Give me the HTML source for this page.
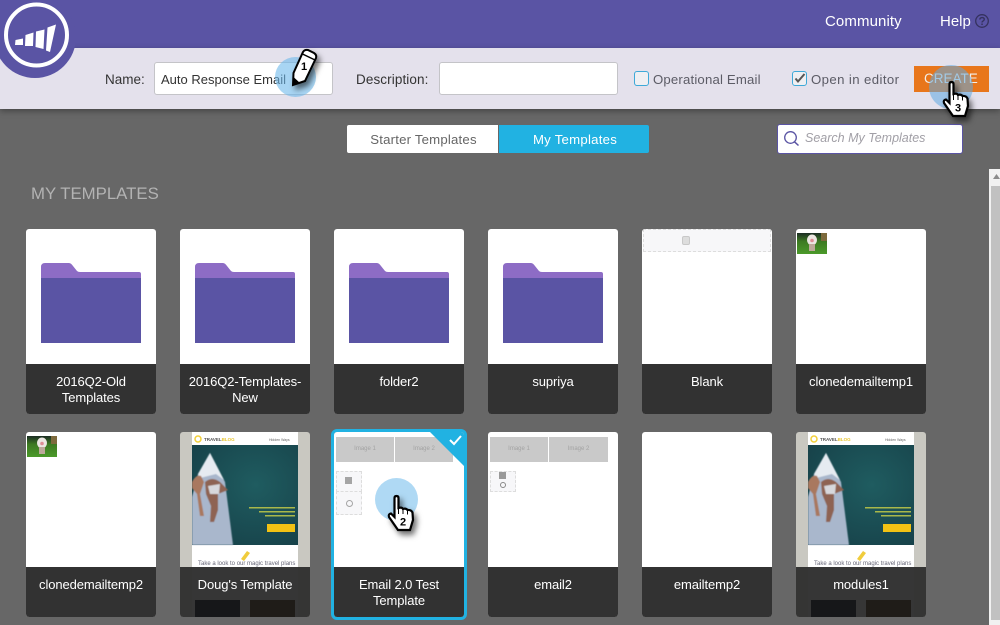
<!DOCTYPE html>
<html><head><meta charset="utf-8">
<style>
html,body{margin:0;padding:0;width:1000px;height:625px;overflow:hidden;background:#676767;font-family:"Liberation Sans","DejaVu Sans",sans-serif}
.a{position:absolute}
#root{position:relative;width:1000px;height:625px;overflow:hidden;background:#676767}
.card{position:absolute;width:130px;height:185px;background:#fff;border-radius:3px;overflow:hidden}
.lbl{position:absolute;left:0;right:0;top:135px;height:50px;background:#323232;color:#fff;font-size:13px;line-height:16px;text-align:center;padding-top:10px;box-sizing:border-box;letter-spacing:-.1px}
.t{position:absolute;white-space:nowrap}
.ph{position:absolute;background:#c9c9c9;color:#a3a3a3;font-size:6px;text-align:center;line-height:25px;height:25px}
.dash{position:absolute;border:1px dashed #ddd;background:#f7f7f9;box-sizing:border-box}
.sh{filter:drop-shadow(3px 4px 3px rgba(0,0,0,.55))}
</style></head><body>
<div id="root">
<div class="a" style="left:0;top:0;width:1000px;height:48px;background:#5a54a4"></div>
<div class="a" style="left:0;top:48px;width:1000px;height:61px;background:#e4e1ec;box-shadow:0 2px 6px rgba(0,0,0,.35)"></div>
<svg class="a" style="left:0;top:0" width="80" height="80" viewBox="0 0 80 80">
<circle cx="35" cy="37" r="41" fill="#5a54a4"/>
<circle cx="36.500" cy="35" r="30.500" fill="#5a54a4" stroke="#fff" stroke-width="4"/>
<path d="M15.500 40L23 38.500V45H15Z M25.500 35L33.500 32.500 33 46H25Z M36 31.500L44.500 29.500 43.500 49 35.500 47Z M47.500 27.500L56 24.500 50 52 46 50.500Z" fill="#fff"/>
</svg>
<div class="t" style="left:825px;top:13px;font-size:15px;color:#fff;letter-spacing:.1px">Community</div>
<div class="t" style="left:940px;top:13px;font-size:15px;color:#fff">Help</div>
<svg class="a" style="left:975px;top:14px" width="15" height="15" viewBox="0 0 15 15"><circle cx="7" cy="7" r="6.300" fill="none" stroke="#35325f" stroke-width="1.300"/><path d="M4.800 5.600C5 3 9.300 3 9.300 5.300C9.300 6.900 7 6.900 7 8.500" fill="none" stroke="#35325f" stroke-width="1.400"/><rect x="6.300" y="9.500" width="1.500" height="1.500" fill="#35325f"/></svg>

<div class="t" style="left:105px;top:72px;font-size:13.500px;color:#333">Name:</div>
<div class="a" style="left:154px;top:62px;width:179px;height:33px;background:#fff;border:1px solid #c4c4c8;border-radius:3px;box-sizing:border-box"></div>
<div class="t" style="left:161px;top:72px;font-size:13px;color:#333">Auto Response Email</div>
<div class="t" style="left:356px;top:72px;font-size:13.500px;color:#333;letter-spacing:.1px">Description:</div>
<div class="a" style="left:439px;top:62px;width:179px;height:33px;background:#fff;border:1px solid #c4c4c8;border-radius:3px;box-sizing:border-box"></div>
<div class="a" style="left:634px;top:71px;width:15px;height:15px;background:#efeff2;border:1.500px solid #3ea9d8;border-radius:3px;box-sizing:border-box"></div>
<div class="t" style="left:653px;top:72px;font-size:13.200px;color:#5c5c66;letter-spacing:.17px">Operational Email</div>
<div class="a" style="left:792px;top:71px;width:15px;height:15px;background:#efeff2;border:1.500px solid #3ea9d8;border-radius:3px;box-sizing:border-box"></div>
<svg class="a" style="left:792px;top:71px" width="15" height="15" viewBox="0 0 15 15"><path d="M3.500 7.500L6 10.500 12.500 3" fill="none" stroke="#555" stroke-width="2"/></svg>
<div class="t" style="left:811px;top:72px;font-size:13.200px;color:#5c5c66;letter-spacing:.4px">Open in editor</div>
<div class="a" style="left:914px;top:66px;width:75px;height:26px;background:#e8761b"></div>
<div class="t" style="left:924px;top:71px;font-size:13.500px;color:#f3efe9">CREATE</div>

<div class="a" style="left:347px;top:125px;width:151px;height:28px;background:#fff;border-radius:2px 0 0 2px"></div>
<div class="t" style="left:348px;top:132px;width:151px;text-align:center;font-size:13.200px;color:#666;letter-spacing:.2px">Starter Templates</div>
<div class="a" style="left:499px;top:125px;width:150px;height:28px;background:#21b2e2;border-radius:0 2px 2px 0"></div>
<div class="t" style="left:500px;top:132px;width:150px;text-align:center;font-size:13.200px;color:#fff;letter-spacing:.25px">My Templates</div>
<div class="a" style="left:777px;top:124px;width:186px;height:30px;background:#fff;border:1px solid #5a54a4;border-radius:3px;box-sizing:border-box"></div>
<svg class="a" style="left:783px;top:130px" width="18" height="18" viewBox="0 0 18 18"><circle cx="7.500" cy="7.500" r="5.800" fill="none" stroke="#5a54a4" stroke-width="1.300"/><path d="M11.500 11.800L15.500 15.500" stroke="#5a54a4" stroke-width="1.500"/></svg>
<div class="t" style="left:805px;top:131px;font-size:12.500px;font-style:italic;color:#a19fa6">Search My Templates</div>

<div class="t" style="left:31px;top:184px;font-size:16.800px;color:#b3b3b3">MY TEMPLATES</div>

<div class="a" style="left:989px;top:169px;width:11px;height:456px;background:#f1f1f1"></div>
<div class="a" style="left:991px;top:186px;width:9px;height:434px;background:#c1c1c1"></div>
<svg class="a" style="left:993px;top:174px" width="7" height="5"><path d="M0 5L3.500 0 7 5Z" fill="#8b8b8b"/></svg>

<!-- Row 1 -->
<div class="card" style="left:26px;top:229px"><svg class="a" style="left:15px;top:34px" width="100" height="80"><path d="M0 4Q0 0 4 0H28Q30 0 32 3L36 8Q37 9 39 9H98Q100 9 100 11V16H0Z" fill="#8d6cc5"/><rect y="15" width="100" height="65" fill="#5a54a4"/></svg><div class="lbl">2016Q2-Old<br>Templates</div></div>
<div class="card" style="left:180px;top:229px"><svg class="a" style="left:15px;top:34px" width="100" height="80"><path d="M0 4Q0 0 4 0H28Q30 0 32 3L36 8Q37 9 39 9H98Q100 9 100 11V16H0Z" fill="#8d6cc5"/><rect y="15" width="100" height="65" fill="#5a54a4"/></svg><div class="lbl">2016Q2-Templates-<br>New</div></div>
<div class="card" style="left:334px;top:229px"><svg class="a" style="left:15px;top:34px" width="100" height="80"><path d="M0 4Q0 0 4 0H28Q30 0 32 3L36 8Q37 9 39 9H98Q100 9 100 11V16H0Z" fill="#8d6cc5"/><rect y="15" width="100" height="65" fill="#5a54a4"/></svg><div class="lbl">folder2</div></div>
<div class="card" style="left:488px;top:229px"><svg class="a" style="left:15px;top:34px" width="100" height="80"><path d="M0 4Q0 0 4 0H28Q30 0 32 3L36 8Q37 9 39 9H98Q100 9 100 11V16H0Z" fill="#8d6cc5"/><rect y="15" width="100" height="65" fill="#5a54a4"/></svg><div class="lbl">supriya</div></div>
<div class="card" style="left:642px;top:229px"><div class="dash" style="left:1px;top:0;width:128px;height:23px"></div><div class="a" style="left:40px;top:7px;width:8px;height:9px;background:#ddd;border:1px solid #c8c8c8;border-radius:2px;box-sizing:border-box"></div><div class="lbl">Blank</div></div>
<div class="card" style="left:796px;top:229px"><svg class="a" style="left:1px;top:4px" width="30" height="21"><defs><linearGradient id="g" x1="0" y1="0" x2="0" y2="1"><stop offset="0" stop-color="#1c2c24"/><stop offset=".4" stop-color="#3d7a22"/><stop offset="1" stop-color="#4b9a2a"/></linearGradient></defs><rect width="30" height="21" fill="url(#g)"/><rect x="24" width="6" height="8" fill="#7d6a3d"/><ellipse cx="15" cy="7" rx="5" ry="5.500" fill="#ece6e2"/><circle cx="15" cy="7.500" r="1.800" fill="#dd8d95"/><rect x="12" y="11" width="6" height="7" fill="#bda99a"/></svg><div class="lbl">clonedemailtemp1</div></div>

<!-- Row 2 -->
<div class="card" style="left:26px;top:432px"><svg class="a" style="left:1px;top:4px" width="30" height="21"><rect width="30" height="21" fill="url(#g)"/><rect x="24" width="6" height="8" fill="#7d6a3d"/><ellipse cx="15" cy="7" rx="5" ry="5.500" fill="#ece6e2"/><circle cx="15" cy="7.500" r="1.800" fill="#dd8d95"/><rect x="12" y="11" width="6" height="7" fill="#bda99a"/></svg><div class="lbl">clonedemailtemp2</div></div>

<div class="card" style="left:180px;top:432px;background:#c9c8c1">
 <div class="a" style="left:12px;top:0;width:106px;height:185px;background:#fff"></div>
 <svg class="a" style="left:12px;top:0" width="106" height="135">
  <defs><filter id="b" x="-10%" y="-10%" width="120%" height="120%"><feGaussianBlur stdDeviation=".6"/></filter><radialGradient id="w" cx=".6" cy=".4" r=".8"><stop offset="0" stop-color="#1f5c60"/><stop offset="1" stop-color="#163f47"/></radialGradient></defs>
  <circle cx="6" cy="7" r="3" fill="none" stroke="#f2cf3a" stroke-width="1.500"/>
  <text x="12" y="9" font-size="4.500" font-weight="bold" fill="#555" font-family="Liberation Sans">TRAVEL<tspan fill="#e8c52e">BLOG</tspan></text>
  <text x="77" y="9" font-size="3.500" fill="#666" font-family="Liberation Sans">Hidden Ways</text>
  <rect y="13" width="106" height="100" fill="url(#w)"/>
  <g filter="url(#b)">
  <path d="M18 21L33 50 41 113H0V65L6 42Z" fill="#a9b7cc"/>
  <path d="M18 21L32 48 24 42 8 46 6 42Z" fill="#e6ebf1"/>
  <path d="M0 50Q4 42 9 44L12 50 8 62 12 84H8L5 62 0 56Z" fill="#a9785f"/>
  <path d="M13 50Q20 44 28 50L36 58 26 62 26 78 22 90H18L19 74 14 62Z" fill="#8e6452"/>
  <path d="M16 54L28 52 27 62 18 62Z" fill="#d7d8dc"/>
  </g>
  <rect x="75" y="92" width="28" height="8" fill="#f2c214"/>
  <rect x="57" y="75" width="46" height="1.500" fill="#a9b84a"/><rect x="67" y="79" width="36" height="1.500" fill="#a9b84a"/><rect x="73" y="83" width="30" height="1.500" fill="#a9b84a"/>
  <path d="M49 127L55 119 58 121 52 129Z" fill="#f0cc3c"/>
 </svg>
 <div class="t" style="left:18px;top:129px;width:94px;text-align:center;font-size:6px;color:#667">Take a look to our magic travel plans</div>
 <div class="lbl" style="background:rgba(47,47,47,.97)"></div>
 <div class="a" style="left:15px;top:168px;width:45px;height:17px;background:#161719"></div>
 <div class="a" style="left:70px;top:168px;width:45px;height:17px;background:#1f1c18"></div>
 <div class="t" style="left:0;top:145px;width:130px;text-align:center;font-size:13px;color:#fff;letter-spacing:-.1px">Doug's Template</div>
</div>

<div class="a" style="left:331px;top:429px;width:136px;height:191px;border:3px solid #21b2e2;border-radius:6px;box-sizing:border-box"></div>
<div class="card" style="left:334px;top:432px">
 <div class="ph" style="left:2px;top:5px;width:58px">Image 1</div><div class="ph" style="left:61px;top:5px;width:58px">Image 2</div>
 <div class="dash" style="left:2px;top:39px;width:26px;height:21px"></div>
 <div class="dash" style="left:2px;top:59px;width:26px;height:24px"></div>
 <div class="a" style="left:11px;top:45px;width:7px;height:7px;background:#a5a5a5"></div>
 <div class="a" style="left:12px;top:68px;width:7px;height:7px;border:1.500px solid #a5a5a5;border-radius:50%;box-sizing:border-box"></div>
 <svg class="a" style="left:96px;top:0" width="34" height="34"><path d="M0 0H34V34Z" fill="#21b2e2"/><path d="M20 8L24 12 31 4" fill="none" stroke="#fff" stroke-width="2"/></svg>
 <div class="lbl">Email 2.0 Test<br>Template</div>
</div>

<div class="card" style="left:488px;top:432px">
 <div class="ph" style="left:2px;top:5px;width:58px">Image 1</div><div class="ph" style="left:61px;top:5px;width:59px">Image 2</div>
 <div class="dash" style="left:2px;top:39px;width:26px;height:21px"></div>
 <div class="a" style="left:11px;top:40px;width:7px;height:7px;background:#999"></div>
 <div class="a" style="left:12px;top:50px;width:6px;height:6px;border:1.500px solid #888;border-radius:50%;box-sizing:border-box"></div>
 <div class="lbl">email2</div>
</div>
<div class="card" style="left:642px;top:432px"><div class="lbl">emailtemp2</div></div>

<div class="card" style="left:796px;top:432px;background:#c9c8c1">
 <div class="a" style="left:12px;top:0;width:106px;height:185px;background:#fff"></div>
 <svg class="a" style="left:12px;top:0" width="106" height="135">
  <circle cx="6" cy="7" r="3" fill="none" stroke="#f2cf3a" stroke-width="1.500"/>
  <text x="12" y="9" font-size="4.500" font-weight="bold" fill="#555" font-family="Liberation Sans">TRAVEL<tspan fill="#e8c52e">BLOG</tspan></text>
  <text x="77" y="9" font-size="3.500" fill="#666" font-family="Liberation Sans">Hidden Ways</text>
  <rect y="13" width="106" height="100" fill="url(#w)"/>
  <g filter="url(#b)">
  <path d="M18 21L33 50 41 113H0V65L6 42Z" fill="#a9b7cc"/>
  <path d="M18 21L32 48 24 42 8 46 6 42Z" fill="#e6ebf1"/>
  <path d="M0 50Q4 42 9 44L12 50 8 62 12 84H8L5 62 0 56Z" fill="#a9785f"/>
  <path d="M13 50Q20 44 28 50L36 58 26 62 26 78 22 90H18L19 74 14 62Z" fill="#8e6452"/>
  <path d="M16 54L28 52 27 62 18 62Z" fill="#d7d8dc"/>
  </g>
  <rect x="75" y="92" width="28" height="8" fill="#f2c214"/>
  <rect x="57" y="75" width="46" height="1.500" fill="#a9b84a"/><rect x="67" y="79" width="36" height="1.500" fill="#a9b84a"/><rect x="73" y="83" width="30" height="1.500" fill="#a9b84a"/>
  <path d="M49 127L55 119 58 121 52 129Z" fill="#f0cc3c"/>
 </svg>
 <div class="t" style="left:18px;top:129px;width:94px;text-align:center;font-size:6px;color:#667">Take a look to our magic travel plans</div>
 <div class="lbl" style="background:rgba(47,47,47,.97)"></div>
 <div class="a" style="left:15px;top:168px;width:45px;height:17px;background:#161719"></div>
 <div class="a" style="left:70px;top:168px;width:45px;height:17px;background:#1f1c18"></div>
 <div class="t" style="left:0;top:145px;width:130px;text-align:center;font-size:13px;color:#fff;letter-spacing:-.1px">modules1</div>
</div>

<!-- callouts -->
<div class="a" style="left:275px;top:57px;width:41px;height:40px;border-radius:50%;background:rgba(110,185,235,.6)"></div>
<svg class="a sh" style="left:288px;top:46px;overflow:visible" width="34" height="44" viewBox="0 0 34 44"><path d="M5 39L5.500 27 15 6Q16.500 3.500 20 4L26 7Q29 9 28 12L17 35Z" fill="#fff" stroke="#000" stroke-width="2"/><path d="M5 39L5.500 31 12 37Z" fill="#000"/><path d="M14.500 8L27 14" stroke="#000" stroke-width="1.500"/><text x="13" y="24" font-size="11" font-weight="bold" fill="#000" font-family="Liberation Sans">1</text></svg>

<div class="a" style="left:929px;top:65px;width:44px;height:44px;border-radius:50%;background:rgba(95,170,225,.55)"></div>
<svg class="a sh" style="left:940px;top:80px;overflow:visible" width="32" height="40" viewBox="0 0 32 40"><path d="M9.500 4Q9.500 2 11.500 2T13.500 4V14Q17 13 18 15Q21 14 22.500 16Q26 15.500 27.500 18.500L28 26 25 36H13L4 23Q3 20 6 19.500L9.500 23Z" fill="#fff" stroke="#000" stroke-width="2.200"/><path d="M13.500 14V20M18 15V20M22.500 16V20.500" stroke="#000" stroke-width="1"/><text x="15" y="31.500" font-size="11" font-weight="bold" fill="#000" font-family="Liberation Sans">3</text></svg>

<div class="a" style="left:375px;top:478px;width:43px;height:43px;border-radius:50%;background:rgba(110,185,235,.55)"></div>
<svg class="a sh" style="left:385px;top:494px;overflow:visible" width="32" height="40" viewBox="0 0 32 40"><path d="M9.500 4Q9.500 2 11.500 2T13.500 4V14Q17 13 18 15Q21 14 22.500 16Q26 15.500 27.500 18.500L28 26 25 36H13L4 23Q3 20 6 19.500L9.500 23Z" fill="#fff" stroke="#000" stroke-width="2.200"/><path d="M13.500 14V20M18 15V20M22.500 16V20.500" stroke="#000" stroke-width="1"/><text x="15" y="31.500" font-size="11" font-weight="bold" fill="#000" font-family="Liberation Sans">2</text></svg>
</div>
</body></html>
